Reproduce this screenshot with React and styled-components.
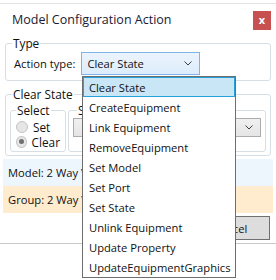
import React from "react";
import styled, { createGlobalStyle } from "styled-components";

const TEXT = "11.2px";

const GlobalStyle = createGlobalStyle`
  html, body {
    margin: 0;
    padding: 0;
    background: #ffffff;
  }
  body {
    font-family: "Open Sans", "Noto Sans", sans-serif;
    font-size: ${TEXT};
    color: #111111;
  }
`;

const ACTIONS = [
  "Clear State",
  "CreateEquipment",
  "Link Equipment",
  "RemoveEquipment",
  "Set Model",
  "Set Port",
  "Set State",
  "Unlink Equipment",
  "Update Property",
  "UpdateEquipmentGraphics"
];

const Dialog = styled.div`
  position: relative;
  width: 276px;
  height: 277px;
  box-sizing: border-box;
  border-top: 1px solid #e3e3e3;
  margin-top: 3px;
  display: flex;
  flex-direction: column;
  overflow: hidden;
`;

const TitleBar = styled.div`
  display: flex;
  align-items: center;
  justify-content: space-between;
  height: 19px;
  padding: 7px 5px 0 12px;
`;

const Title = styled.div`
  font-size: 12.5px;
  color: #1a1a33;
  margin-top: -2px;
`;

const CloseButton = styled.div`
  width: 18px;
  height: 19px;
  background: #c75050;
  color: #ffffff;
  font-size: 11px;
  font-weight: 700;
  display: flex;
  align-items: center;
  justify-content: center;
  line-height: 1;
  padding-bottom: 2px;
  box-sizing: border-box;
`;

const Group = styled.fieldset`
  margin: ${({ $margin }) => $margin || "0"};
  padding: ${({ $padding }) => $padding || "0 6px"};
  border: 1px solid #d5dfe5;
  border-radius: 3px;
  min-width: 0;
  box-sizing: border-box;
  flex: ${({ $flex }) => $flex || "none"};
  width: ${({ $width }) => ($width ? `${$width}px` : "auto")};
`;

const Legend = styled.legend`
  padding: 0 1px;
  line-height: 16px;
  font-size: 11.8px;
  margin-left: ${({ $offset }) => $offset || 0}px;
`;

const ActionRow = styled.div`
  display: flex;
  align-items: center;
  gap: 6px;
  padding: 1px 0 5px 2px;
`;

const Label = styled.span`
  font-size: ${TEXT};
`;

const ComboBox = styled.div`
  display: flex;
  align-items: center;
  justify-content: space-between;
  box-sizing: border-box;
  height: ${({ $height }) => $height}px;
  width: ${({ $width }) => ($width ? `${$width}px` : "auto")};
  padding: 0 7px 0 5px;
  font-size: ${TEXT};
  border: 1px solid ${({ $active }) => ($active ? "#7eb4ea" : "#acacac")};
  background: ${({ $active }) =>
    $active
      ? "linear-gradient(#ecf4fc, #dcecfc)"
      : "linear-gradient(#f0f0f0, #e5e5e5)"};
`;

const Chevron = () => (
  <svg width="8" height="5" viewBox="0 0 8 5">
    <path d="M0.5 0.5 L4 4 L7.5 0.5" fill="none" stroke="#404040" strokeWidth="1" />
  </svg>
);

const StateColumns = styled.div`
  display: flex;
  gap: 2px;
`;

const RadioList = styled.div`
  display: flex;
  flex-direction: column;
  padding: 1px 0 2px 0;
`;

const RadioRow = styled.div`
  display: flex;
  align-items: center;
  gap: 5px;
  height: 15px;
  font-size: 11.8px;
`;

const RadioDot = styled.span`
  width: 12px;
  height: 12px;
  border-radius: 50%;
  box-sizing: border-box;
  border: 1px solid #c4c4c4;
  background: #e6e6e6;
  display: flex;
  align-items: center;
  justify-content: center;
  &::after {
    content: "";
    width: 5px;
    height: 5px;
    border-radius: 50%;
    background: ${({ $checked }) => ($checked ? "#707070" : "transparent")};
  }
`;

const InfoRow = styled.div`
  margin: ${({ $gapTop }) => $gapTop || 0}px 3px 0 3px;
  height: ${({ $height }) => $height}px;
  display: flex;
  align-items: center;
  padding-left: 5px;
  font-size: ${TEXT};
  background: ${({ $tone }) => ($tone === "blue" ? "#eef6fd" : "#ffebcd")};
`;

const Footer = styled.div`
  display: flex;
  justify-content: flex-end;
  padding: 3px 6px 3px 0;
  border-bottom: 1px solid #c8c8c8;
`;

const Button = styled.div`
  width: 80px;
  height: 24px;
  box-sizing: border-box;
  border: 1px solid #707070;
  background: #dddddd;
  display: flex;
  align-items: center;
  justify-content: center;
  font-size: ${TEXT};
`;

const DropList = styled.div`
  position: absolute;
  left: 82px;
  top: 72px;
  width: 154px;
  box-sizing: border-box;
  border: 1px solid #6e6e6e;
  background: #ffffff;
`;

const DropItem = styled.div`
  height: 20px;
  box-sizing: border-box;
  display: flex;
  align-items: center;
  padding-left: 5px;
  font-size: ${TEXT};
  border: 1px solid ${({ $selected }) => ($selected ? "#26a0da" : "transparent")};
  background: ${({ $selected }) => ($selected ? "#c8e6f6" : "transparent")};
`;

export default function App() {
  return (
    <>
      <GlobalStyle />
      <Dialog>
        <TitleBar>
          <Title>Model Configuration Action</Title>
          <CloseButton>x</CloseButton>
        </TitleBar>

        <Group $margin="5px 5px 0 5px">
          <Legend>Type</Legend>
          <ActionRow>
            <Label>Action type:</Label>
            <ComboBox $active $height={23} $width={119}>
              <span>Clear State</span>
              <Chevron />
            </ComboBox>
          </ActionRow>
        </Group>

        <Group $margin="5px 5px 0 5px" $padding="0 4px 3px 4px">
          <Legend $offset={2}>Clear State</Legend>
          <StateColumns>
            <Group $width={56} $padding="0 5px">
              <Legend>Select</Legend>
              <RadioList>
                <RadioRow>
                  <RadioDot />
                  Set
                </RadioRow>
                <RadioRow>
                  <RadioDot $checked />
                  Clear
                </RadioRow>
              </RadioList>
            </Group>
            <Group $flex="1" $padding="0 4px 14px 4px">
              <Legend $offset={4}>State</Legend>
              <ComboBox $height={19}>
                <span />
                <Chevron />
              </ComboBox>
            </Group>
          </StateColumns>
        </Group>

        <InfoRow $tone="blue" $height={27} $gapTop={3}>
          Model: 2 Way Valve
        </InfoRow>
        <InfoRow $tone="orange" $height={27}>
          Group: 2 Way Valves
        </InfoRow>

        <Footer>
          <Button>Cancel</Button>
        </Footer>

        <DropList>
          {ACTIONS.map((a, i) => (
            <DropItem key={a} $selected={i === 0}>
              {a}
            </DropItem>
          ))}
        </DropList>
      </Dialog>
    </>
  );
}
